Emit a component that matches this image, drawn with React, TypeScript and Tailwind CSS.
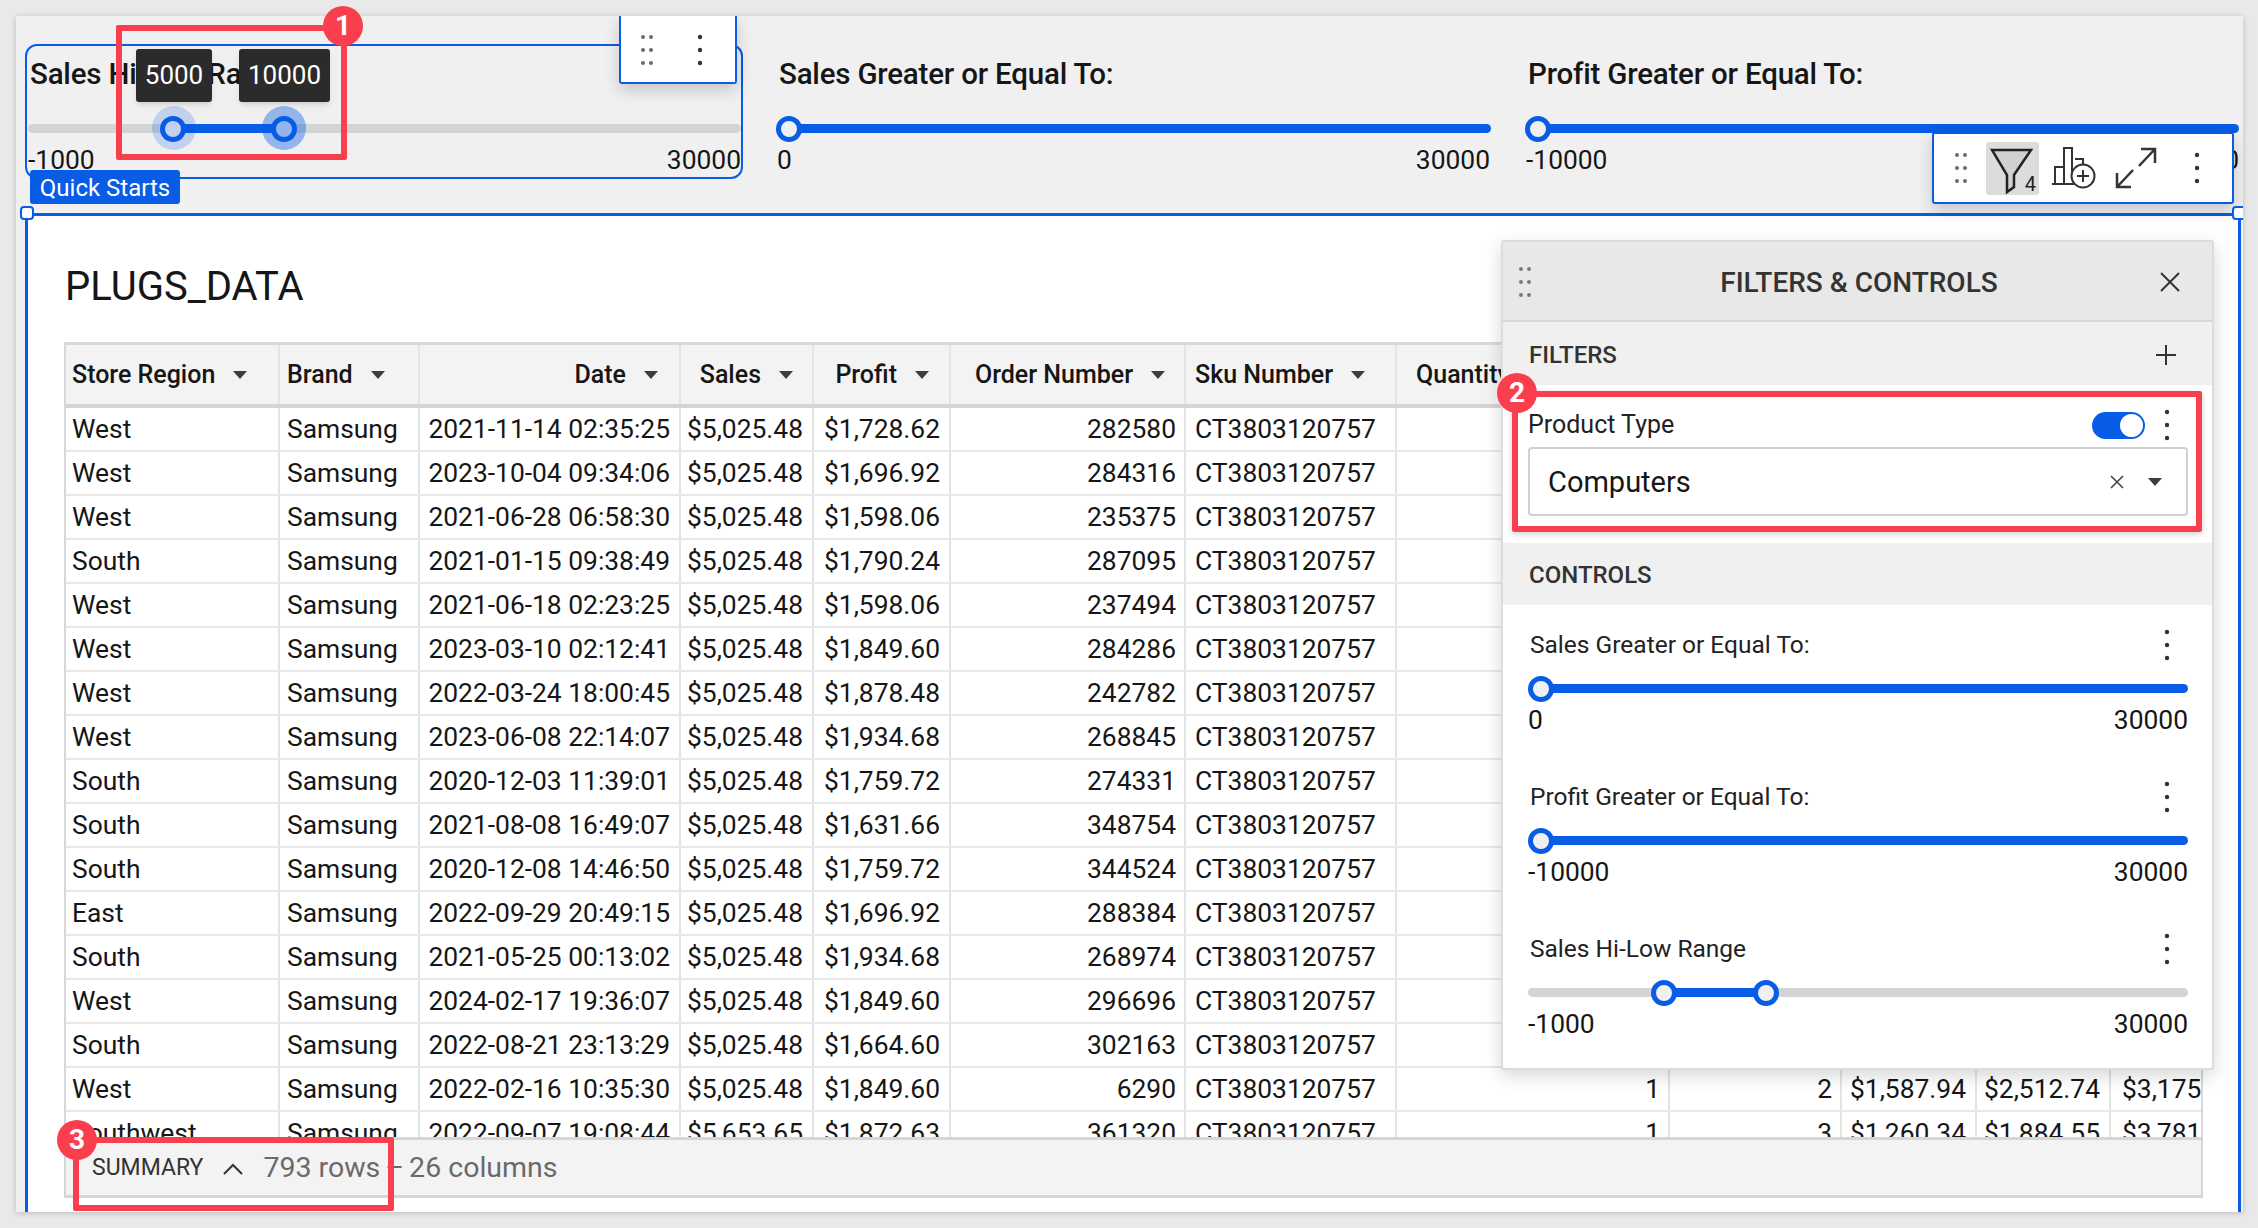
const columns = [214, 140, 261, 133, 137, 235, 211, 273, 172, 135, 134, 94];
const gridCols = 'grid grid-cols-[214px_140px_261px_133px_137px_235px_211px_273px_172px_135px_134px_94px]';

const rows = [
  ['West', '2021-11-14 02:35:25', '$1,728.62', '282580'],
  ['West', '2023-10-04 09:34:06', '$1,696.92', '284316'],
  ['West', '2021-06-28 06:58:30', '$1,598.06', '235375'],
  ['South', '2021-01-15 09:38:49', '$1,790.24', '287095'],
  ['West', '2021-06-18 02:23:25', '$1,598.06', '237494'],
  ['West', '2023-03-10 02:12:41', '$1,849.60', '284286'],
  ['West', '2022-03-24 18:00:45', '$1,878.48', '242782'],
  ['West', '2023-06-08 22:14:07', '$1,934.68', '268845'],
  ['South', '2020-12-03 11:39:01', '$1,759.72', '274331'],
  ['South', '2021-08-08 16:49:07', '$1,631.66', '348754'],
  ['South', '2020-12-08 14:46:50', '$1,759.72', '344524'],
  ['East', '2022-09-29 20:49:15', '$1,696.92', '288384'],
  ['South', '2021-05-25 00:13:02', '$1,934.68', '268974'],
  ['West', '2024-02-17 19:36:07', '$1,849.60', '296696'],
  ['South', '2022-08-21 23:13:29', '$1,664.60', '302163'],
  ['West', '2022-02-16 10:35:30', '$1,849.60', '6290', '1', '2', '$1,587.94', '$2,512.74', '$3,175.29'],
  ['Southwest', '2022-09-07 19:08:44', '$1,872.63', '361320', '1', '3', '$1,260.34', '$1,884.55', '$3,781.12'],
];

function DragDots({ color = '#6b6b6b' }: { color?: string }) {
  return (
    <svg width="14" height="32" viewBox="0 0 14 32" fill={color}>
      <circle cx="3" cy="3" r="2" /><circle cx="11" cy="3" r="2" />
      <circle cx="3" cy="16" r="2" /><circle cx="11" cy="16" r="2" />
      <circle cx="3" cy="29" r="2" /><circle cx="11" cy="29" r="2" />
    </svg>
  );
}

function Kebab({ color = '#333' }: { color?: string }) {
  return (
    <svg width="6" height="32" viewBox="0 0 6 32" fill={color}>
      <circle cx="3" cy="3" r="2.2" /><circle cx="3" cy="16" r="2.2" /><circle cx="3" cy="29" r="2.2" />
    </svg>
  );
}

function Caret() {
  return (
    <svg width="14" height="8" viewBox="0 0 14 8" fill="#3d3d3d" className="shrink-0">
      <path d="M0 0h14L7 8z" />
    </svg>
  );
}

function Slider({ from, to, thumbs, track = false }: { from: number; to: number; thumbs: number[]; track?: boolean }) {
  return (
    <div className={`relative h-[9px] rounded-full ${track ? 'bg-[#d4d4d4]' : ''}`}>
      <div className="absolute inset-y-0 rounded-full bg-[#085ce6]" style={{ left: from, width: to - from }} />
      {thumbs.map((t) => (
        <div
          key={t}
          className="absolute top-1/2 size-[26px] -translate-x-1/2 -translate-y-1/2 rounded-full border-[5px] border-[#085ce6] bg-[#f0f0f0]"
          style={{ left: t }}
        />
      ))}
    </div>
  );
}

function TopControl({ title, from, to, thumbs, track, min }: { title: string; from: number; to: number; thumbs: number[]; track?: boolean; min: string }) {
  return (
    <div className="pt-[41px]">
      <div className="h-[34px] pl-[2px] text-[29.5px] leading-[34px] font-medium tracking-[-0.2px] whitespace-nowrap text-[#161616]">{title}</div>
      <div className="mt-[33px]">
        <Slider from={from} to={to} thumbs={thumbs} track={track} />
      </div>
      <div className="mt-[12px] flex justify-between text-[26.4px] leading-[30px] text-[#161616]">
        <span>{min}</span>
        <span>30000</span>
      </div>
    </div>
  );
}

function PanelControl({ title, min, from, to, thumbs, track }: { title: string; min: string; from: number; to: number; thumbs: number[]; track?: boolean }) {
  return (
    <div className="h-[152px] pl-[25px] pr-[24px]">
      <div className="flex h-[32px] items-center justify-between pl-[2px] pr-[18px] text-[24.5px] text-[#222]">
        <span>{title}</span>
        <Kebab />
      </div>
      <div className="mt-[23px]">
        <Slider from={from} to={to} thumbs={thumbs} track={track} />
      </div>
      <div className="mt-[12px] flex justify-between text-[26.4px] leading-[30px] text-[#161616]">
        <span>{min}</span>
        <span>30000</span>
      </div>
    </div>
  );
}

function HeaderCell({ label, right, pad }: { label: string; right?: boolean; pad: number }) {
  return (
    <div
      className={`flex items-center gap-[18px] border-r-2 border-[#e4e4e4] text-[25px] font-medium text-[#161616] ${right ? 'justify-end' : ''}`}
      style={right ? { paddingRight: pad } : { paddingLeft: pad }}
    >
      <span className="whitespace-nowrap">{label}</span>
      <Caret />
    </div>
  );
}

function Table() {
  return (
    <div className="min-h-0 flex-1 overflow-hidden border-x-2 border-t-[3px] border-[#d8d8d8]" style={{ width: columns.reduce((a, b) => a + b, 0) }}>
      <div className={`${gridCols} h-[63px] border-b-4 border-[#d4d4d4] bg-[#f3f3f3]`}>
        <HeaderCell label="Store Region" pad={6} />
        <HeaderCell label="Brand" pad={7} />
        <HeaderCell label="Date" right pad={21} />
        <HeaderCell label="Sales" right pad={19} />
        <HeaderCell label="Profit" right pad={20} />
        <HeaderCell label="Order Number" right pad={19} />
        <HeaderCell label="Sku Number" pad={9} />
        <HeaderCell label="Quantity" pad={19} />
      </div>
      {rows.map((r) => (
        <div key={r[1]} className={`${gridCols} h-[44px] border-b-2 border-[#e8e8e8] text-[26.4px] leading-[42px] text-[#161616]`}>
          <div className="border-r-2 border-[#e4e4e4] pl-[6px]">{r[0]}</div>
          <div className="border-r-2 border-[#e4e4e4] pl-[7px]">Samsung</div>
          <div className="border-r-2 border-[#e4e4e4] pr-[9px] text-right whitespace-nowrap">{r[1]}</div>
          <div className="border-r-2 border-[#e4e4e4] pr-[9px] text-right">{r[3] === '361320' ? '$5,653.65' : '$5,025.48'}</div>
          <div className="border-r-2 border-[#e4e4e4] pr-[9px] text-right">{r[2]}</div>
          <div className="border-r-2 border-[#e4e4e4] pr-[8px] text-right">{r[3]}</div>
          <div className="border-r-2 border-[#e4e4e4] pl-[9px]">CT3803120757</div>
          <div className="border-r-2 border-[#e4e4e4] pr-[8px] text-right">{r[4]}</div>
          <div className="border-r-2 border-[#e4e4e4] pr-[8px] text-right">{r[5]}</div>
          <div className="border-r-2 border-[#e4e4e4] pr-[9px] text-right">{r[6]}</div>
          <div className="border-r-2 border-[#e4e4e4] pr-[9px] text-right">{r[7]}</div>
          <div className="overflow-hidden pl-[11px] whitespace-nowrap">{r[8]}</div>
        </div>
      ))}
    </div>
  );
}

function Badge({ n, className }: { n: number; className: string }) {
  return (
    <div className={`absolute flex size-[40px] items-center justify-center rounded-full bg-[#f93f4e] text-[28px] font-bold text-white ${className}`}>
      {n}
    </div>
  );
}

function TableToolbar() {
  return (
    <div className="absolute left-[1916px] top-[116px] flex h-[72px] w-[302px] items-center rounded-[3px] border-2 border-[#085ce6] bg-white shadow-[0_6px_16px_rgba(0,0,0,0.18)]">
      <div className="ml-[20px] flex"><DragDots /></div>
      <div className="relative ml-[18px] h-[53px] w-[53px] rounded-[3px] bg-[#dcdcdc]">
        <svg width="44" height="48" viewBox="0 0 44 48" className="absolute left-[4px] top-[5px]" fill="none" stroke="#222" strokeWidth="2.5">
          <path d="M2 3h39L24 28v12l-7 5V28z" fill="#d0d0d0" />
        </svg>
        <span className="absolute right-[3px] bottom-[0px] text-[20px] leading-[22px] text-[#222]">4</span>
      </div>
      <svg width="46" height="44" viewBox="0 0 46 44" className="ml-[12px]" fill="none" stroke="#333" strokeWidth="2">
        <path d="M1 38h22M4 38V21h9v17M13 38V2h8v24M24 13h8v5" />
        <circle cx="32" cy="30" r="11.5" />
        <path d="M32 24v12M26 30h12" />
      </svg>
      <svg width="44" height="42" viewBox="0 0 44 42" className="ml-[17px]" fill="none" stroke="#333" strokeWidth="2.5">
        <path d="M41 2L25 19M27 2h14v14M3 40l16-17M17 40H3V26" />
      </svg>
      <div className="ml-[36px] flex"><Kebab /></div>
    </div>
  );
}

function FiltersPanel() {
  return (
    <div className="absolute left-[1485px] top-[224px] flex h-[830px] w-[713px] flex-col rounded-[3px] border-2 border-[#dcdcdc] bg-white shadow-[0_6px_18px_rgba(0,0,0,0.16)]">
      <div className="flex h-[80px] shrink-0 items-center border-b-2 border-[#d8d8d8] bg-[#e8e8e8] pl-[15px] pr-[32px] pt-[2px]">
        <DragDots color="#7a7a7a" />
        <div className="flex-1 pl-[26px] pt-[2px] text-center text-[28px] font-medium text-[#333]">FILTERS &amp; CONTROLS</div>
        <svg width="20" height="20" viewBox="0 0 20 20" stroke="#333" strokeWidth="2"><path d="M1 1l18 18M19 1L1 19" /></svg>
      </div>
      <div className="flex h-[63px] shrink-0 items-center justify-between bg-[#f0f0f0] pl-[26px] pr-[36px] pt-[2px] text-[24px] font-medium text-[#333]">
        <span>FILTERS</span>
        <svg width="20" height="20" viewBox="0 0 20 20" stroke="#333" strokeWidth="2"><path d="M10 0v20M0 10h20" /></svg>
      </div>
      <div className="h-[158px] shrink-0 pl-[25px] pr-[24px] pt-[24px]">
        <div className="flex h-[32px] items-center justify-between pr-[18px] text-[25px] text-[#222]">
          <span>Product Type</span>
          <div className="flex items-center gap-[19px]">
            <div className="flex h-[27px] w-[53px] items-center justify-end rounded-full bg-[#085ce6] pr-[2px]">
              <div className="size-[23px] rounded-full bg-white" />
            </div>
            <Kebab />
          </div>
        </div>
        <div className="mt-[6px] flex h-[69px] items-center rounded-[4px] border-2 border-[#d0d0d0] pl-[18px] pr-[24px] text-[29px] text-[#161616]">
          <span className="flex-1 pt-[2px]">Computers</span>
          <svg width="14" height="14" viewBox="0 0 14 14" stroke="#444" strokeWidth="1.6"><path d="M1 1l12 12M13 1L1 13" /></svg>
          <span className="ml-[24px]"><Caret /></span>
        </div>
      </div>
      <div className="flex h-[62px] shrink-0 items-center bg-[#f0f0f0] pl-[26px] pt-[2px] text-[24px] font-medium text-[#333]">CONTROLS</div>
      <div className="pt-[24px]">
        <PanelControl title="Sales Greater or Equal To:" min="0" from={8} to={660} thumbs={[13]} />
        <PanelControl title="Profit Greater or Equal To:" min="-10000" from={8} to={660} thumbs={[13]} />
        <PanelControl title="Sales Hi-Low Range" min="-1000" from={136} to={238} thumbs={[136, 238]} track />
      </div>
    </div>
  );
}

export default function App() {
  return (
    <div className="relative h-[1228px] w-[2258px] overflow-hidden bg-[#e9e9e9] font-['Roboto',sans-serif]">
      <div className="relative ml-[16px] mt-[16px] flex h-[1196px] w-[2227px] flex-col overflow-hidden bg-[#f0f0f0] shadow-[0_1px_6px_rgba(0,0,0,0.2)]">
        <div className="grid h-[197px] shrink-0 grid-cols-3 gap-x-[36px] pl-[12px] pr-[4px]">
          <TopControl title="Sales Hi-Low Range" min="-1000" from={145} to={256} thumbs={[145, 256]} track />
          <TopControl title="Sales Greater or Equal To:" min="0" from={8} to={714} thumbs={[12]} />
          <TopControl title="Profit Greater or Equal To:" min="-10000" from={8} to={713} thumbs={[12]} />
        </div>

        {/* data element card */}
        <div className="ml-[9px] mr-[2px] flex min-h-0 flex-1 flex-col border-x-[3px] border-t-[3px] border-[#085ce6] bg-white pb-[14px] pl-[36px]">
          <div className="flex h-[126px] shrink-0 items-center pl-[1px] pt-[16px] text-[40px] text-[#161616]">PLUGS_DATA</div>
          <Table />
          <div className="flex h-[61px] w-[2139px] shrink-0 items-center border-x-2 border-y-[3px] border-[#d6d6d6] bg-[#f3f3f3] pl-[26px] pt-[2px]">
            <span className="text-[23px] text-[#333]">SUMMARY</span>
            <svg width="20" height="12" viewBox="0 0 20 12" className="ml-[20px]" fill="none" stroke="#333" strokeWidth="2"><path d="M1 11l9-9 9 9" /></svg>
            <span className="ml-[20px] text-[28.5px] whitespace-nowrap text-[#6a6a6a]">793 rows <span className="-mx-[2px]">–</span> 26 columns</span>
          </div>
        </div>

        {/* selected control outline and its chrome */}
        <div className="absolute left-[9px] top-[28px] h-[135px] w-[718px] rounded-[12px] border-2 border-[#085ce6]" />
        <div className="absolute left-[14px] top-[154px] flex h-[34px] w-[150px] items-center justify-center rounded-[3px] bg-[#085ce6] pt-[2px] text-[24px] text-white">Quick Starts</div>
        <div className="absolute left-[603px] top-0 flex h-[68px] w-[118px] items-center justify-between rounded-b-[3px] border-x-2 border-b-2 border-[#085ce6] bg-white pl-[19px] pr-[32px] pt-[2px] shadow-[0_6px_16px_rgba(0,0,0,0.18)]">
          <DragDots />
          <Kebab />
        </div>
        <div className="absolute left-[136px] top-[90px] size-[44px] rounded-full bg-[#085ce6]/20" />
        <div className="absolute left-[246px] top-[90px] size-[44px] rounded-full bg-[#085ce6]/40" />
        <div className="absolute left-[120px] top-[33px] flex h-[53px] w-[76px] items-center justify-center rounded-[3px] bg-[#2b2b2b] text-[26px] text-white shadow-md">5000</div>
        <div className="absolute left-[223px] top-[33px] flex h-[53px] w-[91px] items-center justify-center rounded-[3px] bg-[#2b2b2b] text-[26px] text-white shadow-md">10000</div>

        <TableToolbar />
        <FiltersPanel />

        {/* resize handles */}
        <div className="absolute left-[4px] top-[190px] size-[14px] rounded-[4px] border-2 border-[#085ce6] bg-white" />
        <div className="absolute left-[2216px] top-[190px] size-[14px] rounded-[4px] border-2 border-[#085ce6] bg-white" />
      </div>

      {/* callouts */}
      <div className="absolute left-[116px] top-[25px] h-[135px] w-[231px] rounded-[2px] border-[6px] border-[#f93f4e]" />
      <Badge n={1} className="left-[323px] top-[6px]" />
      <div className="absolute left-[1512px] top-[391px] h-[141px] w-[690px] rounded-[2px] border-[6px] border-[#f93f4e] shadow-[0_2px_6px_rgba(0,0,0,0.2)]" />
      <Badge n={2} className="left-[1497px] top-[373px]" />
      <div className="absolute left-[73px] top-[1137px] h-[74px] w-[321px] rounded-[2px] border-[6px] border-[#f93f4e]" />
      <Badge n={3} className="left-[57px] top-[1120px]" />
    </div>
  );
}
